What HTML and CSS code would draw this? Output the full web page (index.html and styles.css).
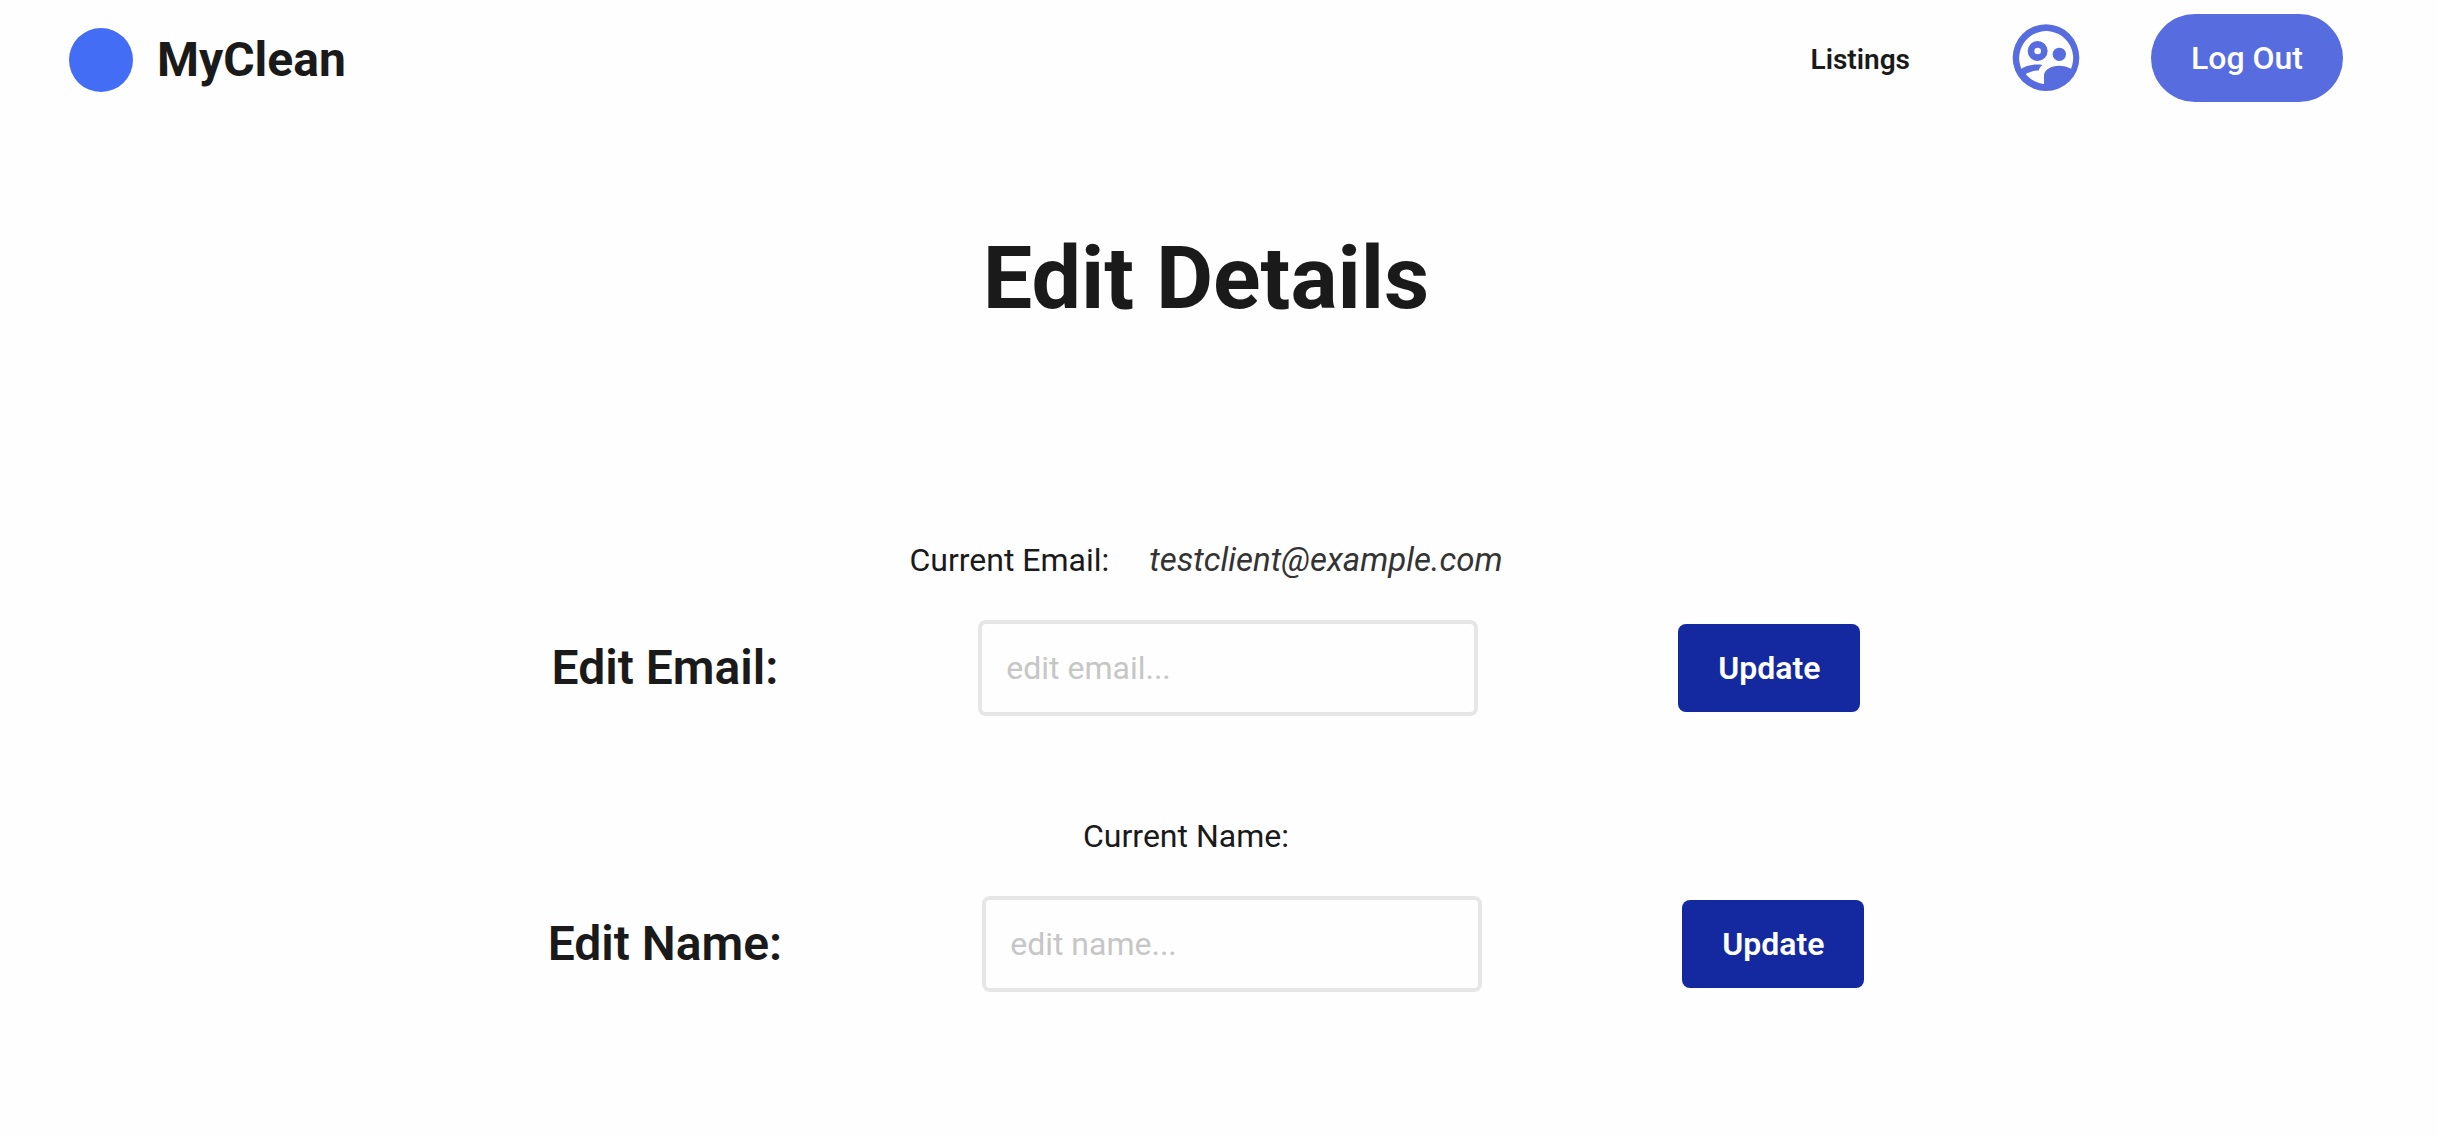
FILE: index.html
```html
<!DOCTYPE html>
<html lang="en">
<head>
<meta charset="utf-8">
<title>MyClean - Edit Details</title>
<link rel="stylesheet" href="styles.css">
</head>
<body>
<header class="header">
  <a class="brand" href="#"><span class="brand-dot"></span>MyClean</a>
  <nav class="nav">
    <a class="nav-link" href="#">Listings</a>
    <a class="nav-profile" href="#" aria-label="Profile">
      <svg class="profile-icon" viewBox="48 25 240 240" aria-hidden="true">
        <circle cx="168" cy="144" r="100" fill="#576cdf"/>
        <path fill="#fefefe" d="M94 177A81 81 0 1 1 243 177C232 171 220 168 207 168C185 168 162 180 162 197V223C140 221 120 209 107 193C119 186 133 182 146 183C148 175 152 170 158 166C134 162 110 167 94 177Z"/>
        <circle cx="143" cy="124" r="30" fill="#576cdf"/>
        <circle cx="143" cy="124" r="10" fill="#fefefe"/>
        <circle cx="208" cy="134" r="20" fill="#576cdf"/>
      </svg>
    </a>
    <button class="button button-pill" type="button">Log Out</button>
  </nav>
</header>
<main class="main">
  <h1 class="title">Edit Details</h1>
  <form class="field">
    <p class="current"><span>Current Email:</span><em class="current-value">testclient@example.com</em></p>
    <div class="row">
      <label class="label" for="email">Edit Email:</label>
      <input class="input" id="email" type="email" placeholder="edit email...">
      <button class="button" type="button">Update</button>
    </div>
  </form>
  <form class="field">
    <p class="current"><span>Current Name:</span><em class="current-value"></em></p>
    <div class="row">
      <label class="label" for="name">Edit Name:</label>
      <input class="input" id="name" type="text" placeholder="edit name...">
      <button class="button" type="button">Update</button>
    </div>
  </form>
</main>
</body>
</html>
```
FILE: styles.css
```css
* {
  box-sizing: border-box;
}

body {
  margin: 0;
  padding-right: 26px;
  background: #fefefe;
  color: #1a1a1a;
  font-family: Roboto, sans-serif;
  font-size: 32px;
  line-height: 48px;
}

.header {
  display: flex;
  align-items: center;
  justify-content: space-between;
  padding: 14px 69px;
}

.brand,
.nav-link {
  padding-top: 4px;
  color: inherit;
  text-decoration: none;
}

.brand {
  display: flex;
  align-items: center;
  gap: 24px;
  font-size: 48px;
  font-weight: 700;
}

.brand-dot {
  width: 64px;
  height: 64px;
  border-radius: 50%;
  background: #446df6;
}

.nav {
  display: flex;
  align-items: center;
}

.nav-link {
  margin-right: 96px;
  font-size: 28px;
  font-weight: 600;
}

.nav-profile {
  margin-right: 65px;
}

.profile-icon {
  display: block;
  width: 80px;
  height: 80px;
}

.button {
  height: 88px;
  padding: 0 40px;
  border: 0;
  border-radius: 8px;
  background: #1428a0;
  color: #fff;
  font: inherit;
  font-weight: 600;
}

.button-pill {
  border-radius: 44px;
  background: #576cdf;
  font-weight: 500;
}

.title {
  margin: 110px 0 206px;
  font-size: 88px;
  font-weight: 700;
  line-height: 104px;
  text-align: center;
}

.field {
  margin-bottom: 96px;
}

.current {
  display: flex;
  justify-content: center;
  gap: 40px;
  margin: 0 0 36px;
}

.current-value {
  color: #333;
  font-size: 33px;
}

.row {
  display: flex;
  align-items: center;
  justify-content: center;
  gap: 200px;
}

.label {
  font-size: 48px;
  font-weight: 600;
}

.input {
  width: 500px;
  height: 96px;
  padding: 0 24px;
  border: 4px solid #e6e6e6;
  border-radius: 8px;
  background: transparent;
  color: inherit;
  font: inherit;
}

.input::placeholder {
  color: #c6c6c6;
}
```
